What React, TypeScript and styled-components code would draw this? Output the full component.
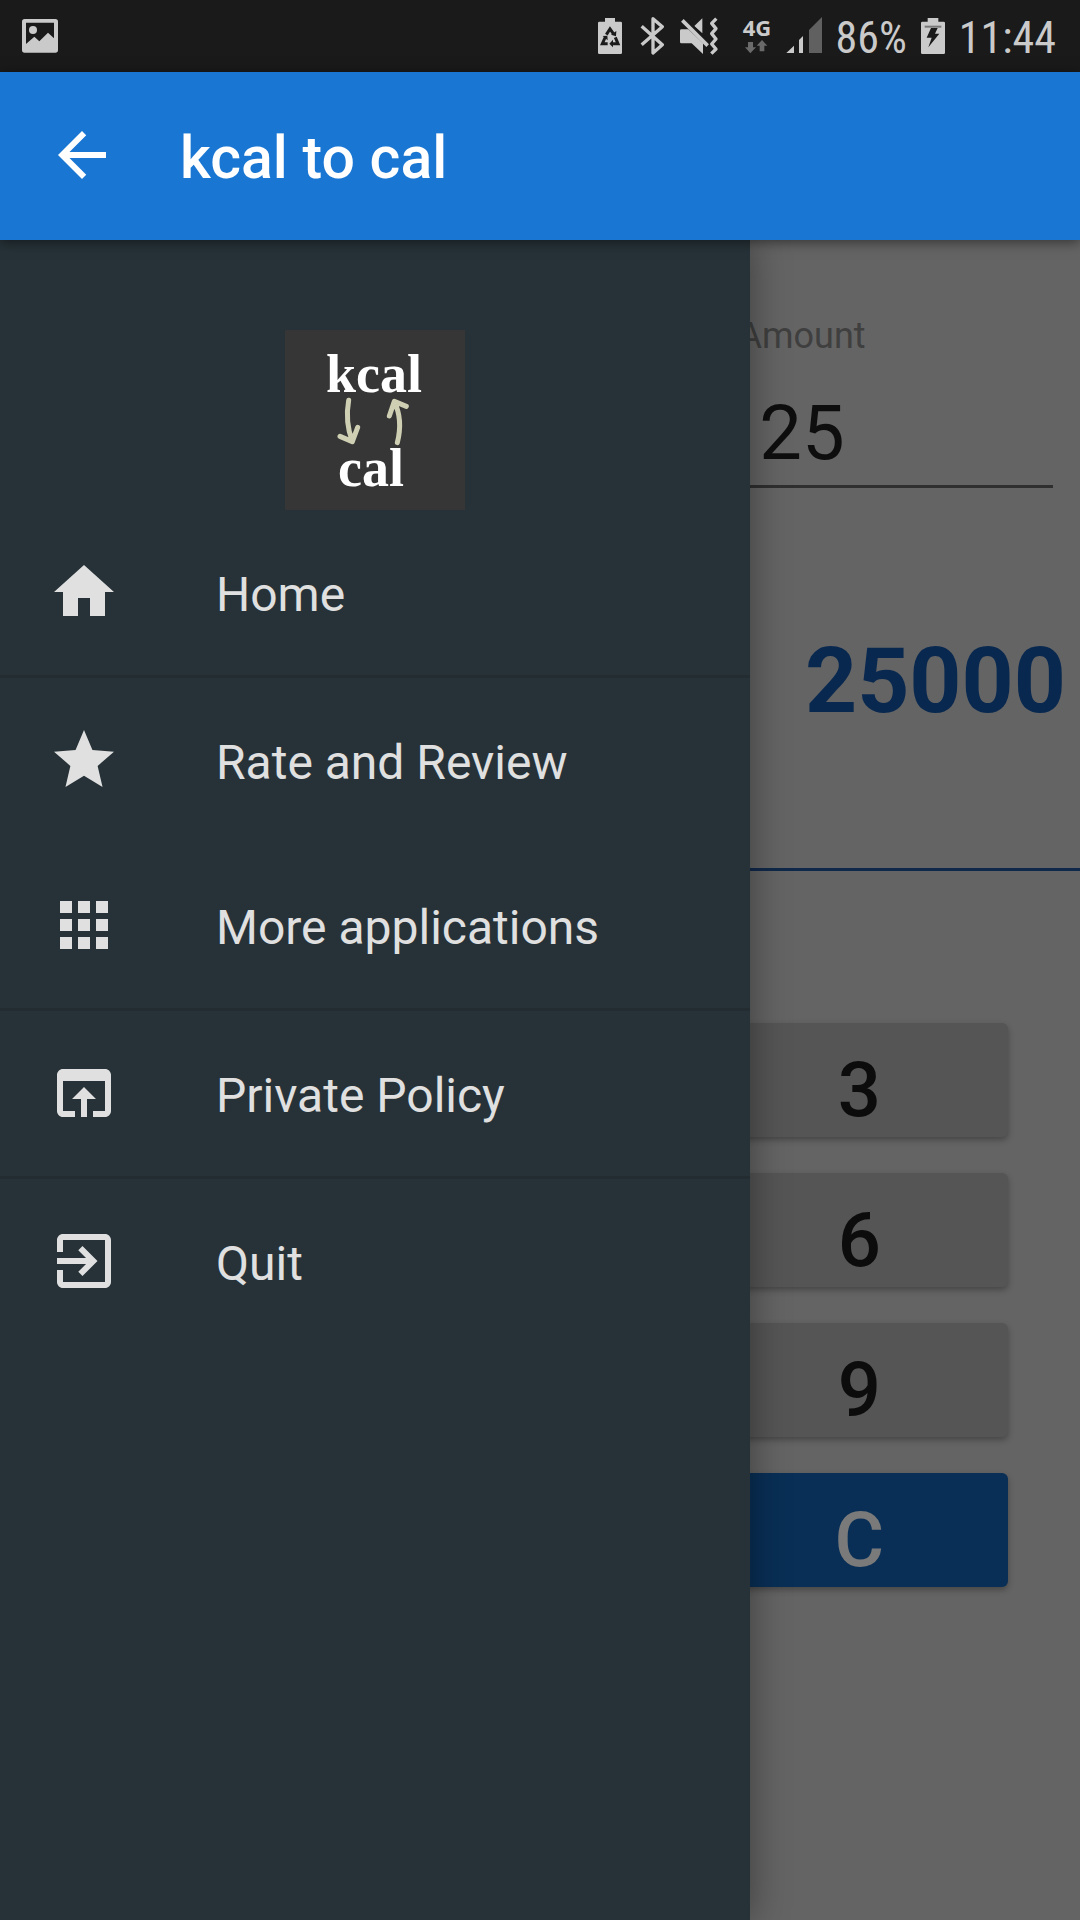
import React from "react";
import styled, { createGlobalStyle } from "styled-components";
import { FaRecycle } from "react-icons/fa";

const GlobalStyle = createGlobalStyle`
  *, *::before, *::after { box-sizing: border-box; }
  body { margin: 0; background: #646464; font-family: Roboto, "Noto Sans", sans-serif; }
  button, input { font-family: inherit; }
`;

const Screen = styled.div`
  display: flex;
  flex-direction: column;
  min-height: 100vh;
`;

const StatusBar = styled.div`
  display: flex;
  align-items: center;
  justify-content: space-between;
  height: 72px;
  padding: 0 24px 0 22px;
  background: #1a1a1a;
  color: #cacaca;
`;

const StatusGroup = styled.div`
  display: flex;
  align-items: center;
  gap: 14px;
`;

const StatusIcon = styled.svg<{ $width: number }>`
  display: block;
  flex: none;
  width: ${(p) => p.$width}px;
  height: 38px;
`;

const StatusText = styled.span`
  padding-top: 4px;
  font-family: "Roboto Condensed", "Liberation Sans Narrow", Roboto, sans-serif;
  font-size: 44px;
  line-height: 52px;
`;

const Network = styled.div`
  display: flex;
  flex-direction: column;
  align-items: center;
  gap: 5px;
  width: 29px;
  font-family: "Noto Sans", "Open Sans", sans-serif;
  font-size: 22px;
  font-weight: 700;
  line-height: 16px;
`;

const NetworkArrows = styled.svg`
  display: block;
  width: 24px;
  height: 14px;
`;

const AppBar = styled.header`
  position: relative;
  z-index: 3;
  display: flex;
  align-items: center;
  height: 168px;
  padding: 0 46px;
  background: #1976d2;
  color: #fff;
  box-shadow: 0 2px 12px rgba(0, 0, 0, 0.5);
`;

const BackButton = styled.button`
  display: flex;
  padding: 0;
  border: 0;
  background: none;
  color: inherit;
`;

const Icon = styled.svg`
  display: block;
  flex: none;
  width: 72px;
  height: 72px;
  margin-bottom: 2px;
  fill: currentColor;
`;

const Title = styled.h1`
  margin: 0;
  padding: 4px 0 0 62px;
  font-size: 59px;
  font-weight: 500;
  line-height: 72px;
`;

const Body = styled.div`
  position: relative;
  flex: 1;
`;

const Drawer = styled.nav`
  position: absolute;
  z-index: 2;
  top: 0;
  bottom: 0;
  left: 0;
  width: min(750px, 84%);
  padding-top: 90px;
  background: #263238;
  color: #e0e0e0;
  box-shadow: 0 0 36px rgba(0, 0, 0, 0.4);
`;

const Logo = styled.svg`
  display: block;
  width: 180px;
  height: 180px;
  margin: 0 auto;
  background: #363636;
`;

const MenuList = styled.ul`
  margin: 0;
  padding: 0;
  list-style: none;
`;

const MenuItem = styled.li<{ $divided?: boolean }>`
  border-top: ${(p) => (p.$divided ? "3px solid #222c31" : "0")};
`;

const MenuLink = styled.a`
  display: flex;
  align-items: center;
  gap: 96px;
  height: 165px;
  padding: 0 48px;
  color: inherit;
  font-size: 48px;
  line-height: 56px;
  text-decoration: none;
`;

const MenuLabel = styled.span`
  padding-top: 4px;
`;

const Main = styled.main`
  display: flex;
  flex-direction: column;
  padding-top: 72px;
`;

const Field = styled.div`
  display: flex;
  flex-direction: column;
  gap: 24px;
  align-self: flex-end;
  width: calc(50% - 38px);
  margin-right: 27px;
  text-align: center;
`;

const FieldLabel = styled.label`
  color: #3f3f3f;
  font-size: 36px;
  line-height: 48px;
`;

const AmountInput = styled.input`
  width: 100%;
  height: 104px;
  padding: 0 0 4px;
  border: 0;
  border-bottom: 3px solid #2f2f2f;
  background: none;
  outline: 0;
  color: #0e0e0e;
  font-size: 76px;
  text-align: center;
`;

const Result = styled.output`
  display: block;
  padding: 139px 14px 133px;
  border-bottom: 3px solid #10294a;
  color: #08284f;
  font-size: 91px;
  font-weight: 700;
  line-height: 108px;
  text-align: right;
`;

const Keypad = styled.div`
  display: grid;
  grid-template-columns: repeat(3, 1fr);
  gap: 36px 22px;
  padding: 152px 72px 0;
`;

const Key = styled.button<{ $primary?: boolean }>`
  grid-column: 3;
  height: 114px;
  padding: 20px 0 0;
  border: 0;
  border-radius: 6px;
  background: ${(p) => (p.$primary ? "#092f56" : "#555")};
  color: ${(p) => (p.$primary ? "#7a7a7a" : "#0c0c0c")};
  box-shadow: 0 3px 6px rgba(0, 0, 0, 0.3);
  font-size: 76px;
  font-weight: 500;
  line-height: 92px;
`;

const menu = [
  { label: "Home", path: "M10 20v-6h4v6h5v-8h3L12 3 2 12h3v8z" },
  {
    label: "Rate and Review",
    divided: true,
    path: "M12 17.27L18.18 21l-1.64-7.03L22 9.24l-7.19-.61L12 2 9.19 8.63 2 9.24l5.46 4.73L5.82 21z",
  },
  {
    label: "More applications",
    path: "M4 8h4V4H4v4zm6 12h4v-4h-4v4zm-6 0h4v-4H4v4zm0-6h4v-4H4v4zm6 0h4v-4h-4v4zm6-10v4h4V4h-4zm-6 4h4V4h-4v4zm6 6h4v-4h-4v4zm0 6h4v-4h-4v4z",
  },
  {
    label: "Private Policy",
    divided: true,
    path: "M19 4H5c-1.11 0-2 .9-2 2v12c0 1.1.89 2 2 2h4v-2H5V8h14v10h-4v2h4c1.1 0 2-.9 2-2V6c0-1.1-.89-2-2-2zm-7 6l-4 4h3v6h2v-6h3l-4-4z",
  },
  {
    label: "Quit",
    divided: true,
    path: "M10.09 15.59L11.5 17l5-5-5-5-1.41 1.41L12.67 11H3v2h9.67l-2.58 2.59zM19 3H5c-1.11 0-2 .9-2 2v4h2V5h14v14H5v-4H3v4c0 1.1.89 2 2 2h14c1.1 0 2-.9 2-2V5c0-1.1-.9-2-2-2z",
  },
];

function AppLogo() {
  return (
    <Logo viewBox="45 60 540 540" role="img" aria-label="kcal to cal">
      <g fill="#fff" fontFamily='"Liberation Serif", serif' fontWeight="700" fontSize="162" textAnchor="middle">
        <text x="312" y="246">kcal</text>
        <text x="303" y="527">cal</text>
      </g>
      <g fill="none" stroke="#cfcfb4" strokeWidth="15" strokeLinecap="round" strokeLinejoin="round">
        <path d="M236 271C229 310 232 355 247 394M210 379L247 395L263 352" />
        <path d="M382 398C393 355 390 310 373 275M358 318L373 274L409 289" />
      </g>
    </Logo>
  );
}

function Status() {
  return (
    <StatusBar>
      <StatusIcon $width={36} viewBox="66 51 108 114">
        <path
          fill="#cacaca"
          fillRule="evenodd"
          d="M74 57H166Q174 57 174 65V150Q174 158 166 158H74Q66 158 66 150V65Q66 57 74 57ZM78 68V132L103 110L118 124L144 98L162 115V68Z"
        />
        <circle cx="99" cy="90" r="12" fill="#cacaca" />
      </StatusIcon>
      <StatusGroup>
        <StatusIcon $width={28} viewBox="57 51 84 114">
          <path fill="#cacaca" d="M78 54H108V65H125Q129 65 129 69V158Q129 162 125 162H61Q57 162 57 158V69Q57 65 61 65H78Z" />
          <g fill="none" stroke="#1a1a1a" strokeWidth="9">
            <path d="M82 104L93 87L103 101" />
            <path d="M79 111L70 131H86" />
            <path d="M109 112L117 131H99" />
          </g>
          <path fill="#1a1a1a" d="M96 104L111 109L112 93ZM71 108L85 107L86 121ZM102 119V142L91 131Z" />
        </StatusIcon>
        <StatusIcon $width={26} viewBox="180 51 78 114">
          <path
            fill="none"
            stroke="#cacaca"
            strokeWidth="10"
            strokeLinejoin="round"
            d="M185 79L247 134L219 159V56L247 80L185 134"
          />
        </StatusIcon>
        <StatusIcon $width={49} viewBox="303 51 147 114">
          <path fill="#cacaca" d="M307 88H328L372 130V162L338 130H307Q303 130 303 126V92Q303 88 307 88ZM346 78L370 55V100Z" />
          <path fill="none" stroke="#1a1a1a" strokeWidth="5" d="M317 55L393 128" />
          <path fill="none" stroke="#cacaca" strokeWidth="11" d="M310 61L386 137" />
          <path
            fill="none"
            stroke="#cacaca"
            strokeWidth="10"
            strokeLinejoin="round"
            d="M412 56L398 70L411 86L398 101L411 117L398 132L411 147L397 161"
          />
        </StatusIcon>
        <Network>
          4G
          <NetworkArrows viewBox="499 120 72 42" aria-hidden>
            <path fill="#6a6a6a" d="M508 126H523V142H532L515 160L499 142H508ZM543 154V137H534L550 120L566 137H557V154Z" />
          </NetworkArrows>
        </Network>
        <StatusIcon $width={36} viewBox="618 51 108 114">
          <path fill="#cacaca" d="M619 159L642 137V159ZM657 159V120L669 108V159Z" />
          <path fill="#606060" d="M687 159V90L726 51V159Z" />
        </StatusIcon>
        <StatusText>86%</StatusText>
        <StatusIcon $width={24} viewBox="300 51 72 114">
          <path fill="#cacaca" d="M320 54H352V65H368Q372 65 372 69V158Q372 162 368 162H304Q300 162 300 158V69Q300 65 304 65H320Z" />
          <path fill="#777" d="M311 77H361V83H311Z" />
          <path fill="#1a1a1a" d="M330 84H350L342 101H355L322 142L332 113H317Z" />
        </StatusIcon>
        <StatusText>11:44</StatusText>
      </StatusGroup>
    </StatusBar>
  );
}

export default function App() {
  return (
    <Screen>
      <GlobalStyle />
      <Status />
      <AppBar>
        <BackButton type="button" aria-label="Back">
          <Icon viewBox="0 0 24 24">
            <path d="M20 11H7.83l5.59-5.59L12 4l-8 8 8 8 1.41-1.41L7.83 13H20v-2z" />
          </Icon>
        </BackButton>
        <Title>kcal to cal</Title>
      </AppBar>
      <Body>
        <Drawer>
          <AppLogo />
          <MenuList>
            {menu.map((item) => (
              <MenuItem key={item.label} $divided={item.divided}>
                <MenuLink href="#">
                  <Icon viewBox="0 0 24 24" aria-hidden>
                    <path d={item.path} />
                  </Icon>
                  <MenuLabel>{item.label}</MenuLabel>
                </MenuLink>
              </MenuItem>
            ))}
          </MenuList>
        </Drawer>
        <Main>
          <Field>
            <FieldLabel htmlFor="amount">Amount</FieldLabel>
            <AmountInput id="amount" inputMode="decimal" defaultValue="25" />
          </Field>
          <Result htmlFor="amount">25000</Result>
          <Keypad>
            <Key type="button">3</Key>
            <Key type="button">6</Key>
            <Key type="button">9</Key>
            <Key type="button" $primary>
              C
            </Key>
          </Keypad>
        </Main>
      </Body>
    </Screen>
  );
}
